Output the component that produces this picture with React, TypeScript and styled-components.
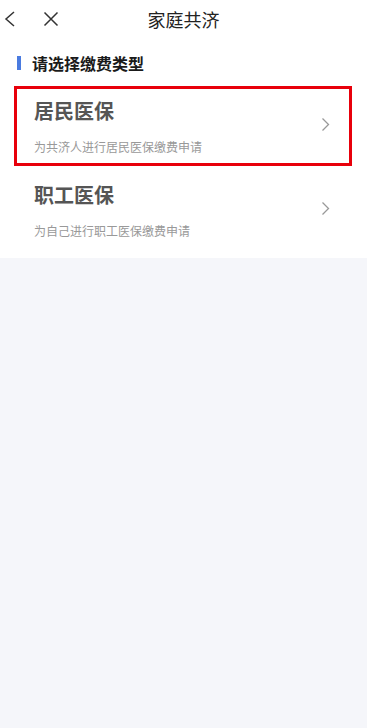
import React from "react";
import styled, { createGlobalStyle } from "styled-components";

const GlobalStyle = createGlobalStyle`
  html, body {
    margin: 0;
    padding: 0;
    background: #f5f6fa;
    font-family: "Noto Sans CJK SC", "Noto Sans", sans-serif;
  }
`;

const Page = styled.div`
  width: 367px;
  min-height: 728px;
  background: #f5f6fa;
`;

const Top = styled.div`
  background: #ffffff;
  padding-bottom: 8px;
`;

const NavBar = styled.div`
  height: 37px;
  display: flex;
  align-items: center;
  position: relative;
`;

const NavIcons = styled.div`
  display: flex;
  align-items: center;
  gap: 26px;
  padding-left: 3px;
  color: #333;
`;

const NavTitle = styled.div`
  position: absolute;
  left: 0;
  right: 0;
  text-align: center;
  font-size: 18px;
  color: #222;
  pointer-events: none;
`;

const SectionTitle = styled.div`
  display: flex;
  align-items: center;
  gap: 11px;
  padding: 15px 0 0 17px;
  height: 22px;
  font-size: 16px;
  font-weight: 700;
  color: #1a1a1a;
`;

const Bar = styled.span`
  width: 4px;
  height: 14px;
  background: #4a7be0;
`;

const List = styled.div`
  display: flex;
  flex-direction: column;
  gap: 4px;
  padding: 12px 15px 0 14px;
`;

const Item = styled.div<{ $highlighted?: boolean }>`
  height: 80px;
  box-sizing: border-box;
  border: 3px solid ${({ $highlighted }) => ($highlighted ? "#e8000b" : "transparent")};
  display: flex;
  align-items: center;
  padding: 0 19px 0 17px;
`;

const Texts = styled.div`
  flex: 1;
  display: flex;
  flex-direction: column;
`;

const ItemTitle = styled.div`
  font-size: 20px;
  font-weight: 700;
  color: #555;
  line-height: 28px;
  margin-top: -1px;
`;

const ItemDesc = styled.div`
  font-size: 12px;
  color: #999;
  line-height: 16px;
  margin-top: 14px;
`;

const ChevronIcon = styled.svg`
  margin-top: -3px;
`;

const Chevron = () => (
  <ChevronIcon width="9" height="15" viewBox="0 0 9 15" fill="none">
    <path d="M1.5 1.5 L7.5 7.5 L1.5 13.5" stroke="#999" strokeWidth="1.3" />
  </ChevronIcon>
);

const items = [
  { title: "居民医保", desc: "为共济人进行居民医保缴费申请", highlighted: true },
  { title: "职工医保", desc: "为自己进行职工医保缴费申请", highlighted: false }
];

export default function App() {
  return (
    <Page>
      <GlobalStyle />
      <Top>
        <NavBar>
          <NavIcons>
            <svg width="14" height="18" viewBox="0 0 14 18" fill="none">
              <path d="M11 2 L3 9 L11 16" stroke="#333" strokeWidth="1.5" />
            </svg>
            <svg width="16" height="16" viewBox="0 0 16 16" fill="none">
              <path d="M1.5 1.5 L14.5 14.5 M14.5 1.5 L1.5 14.5" stroke="#333" strokeWidth="1.5" />
            </svg>
          </NavIcons>
          <NavTitle>家庭共济</NavTitle>
        </NavBar>
        <SectionTitle>
          <Bar />
          请选择缴费类型
        </SectionTitle>
        <List>
          {items.map((it) => (
            <Item key={it.title} $highlighted={it.highlighted}>
              <Texts>
                <ItemTitle>{it.title}</ItemTitle>
                <ItemDesc>{it.desc}</ItemDesc>
              </Texts>
              <Chevron />
            </Item>
          ))}
        </List>
      </Top>
    </Page>
  );
}
